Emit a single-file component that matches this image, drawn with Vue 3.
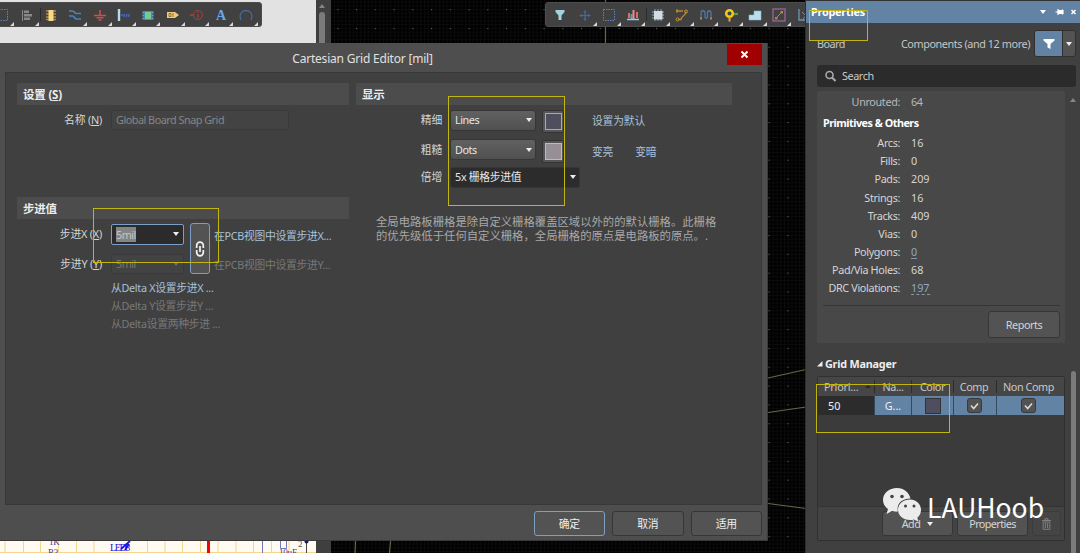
<script setup>
const primitives = [
  ['Arcs:', '16'],
  ['Fills:', '0'],
  ['Pads:', '209'],
  ['Strings:', '16'],
  ['Tracks:', '409'],
  ['Vias:', '0'],
  ['Polygons:', '0', true],
  ['Pad/Via Holes:', '68'],
  ['DRC Violations:', '197', true],
]
const leftTools = ['select', 'align', 'chip', 'wire', 'gnd', 'bus', 'sheet', 'port', 'info', 'text', 'arc']
const rightTools = ['filter', 'plus', 'select', 'chart', 'component', 'route', 'tune', 'via', 'poly', 'keepout', 'dim']
const noMenu = ['chip', 'filter']
const toolbars = [
  { name: 'tools-left', items: leftTools, sep: 'chip' },
  { name: 'tools-right', items: rightTools, sep: 'component' },
]
</script>

<template>
  <div class="screen">
    <div class="workspace">
      <div class="schematic">
        <svg class="sheet-strip" width="316" height="12" viewBox="0 0 316 12">
          <rect width="316" height="12" fill="#fffaf2" />
          <path d="M5 0V12M23.500 0V12M40.500 0V12M58.500 0V12M76.500 0V12M94 0V12M147.500 0V12M165 0V12M182.500 0V12M200.500 0V12M218 0V12M236 0V12M253.500 0V12M271.500 0V12M289 0V12M0 11.500H316" stroke="#f6d58c" stroke-width="1" fill="none" />
          <rect x="207" width="3" height="12" fill="#f00" />
          <path d="M262.500 0V12M280.500 0V7.500H286.500V0" stroke="#7474bd" fill="none" />
          <path d="M306.500 0V12" stroke="#444" />
          <circle cx="306.500" cy="0.500" r="2" fill="#118" />
          <path d="M121 8L130 0M125 9L129 3" stroke="#1515ee" stroke-width="1.800" />
          <g font-family="Liberation Serif, serif" font-size="9" fill="#3838a8">
            <text x="49" y="4">1K</text>
            <text x="48" y="14">R3</text>
            <text x="110" y="9.500" fill="#1515dd" font-size="10" textLength="20">LED8</text>
            <text x="279" y="14">10uF</text>
            <text x="298" y="6" fill="#555">2</text>
          </g>
        </svg>
      </div>
      <div class="divider"><i class="up-arrow"></i><span></span></div>
      <svg class="pcb" width="475" height="553" viewBox="331 0 475 553">
        <defs>
          <pattern id="fine" x="769" y="347.800" width="3.750" height="3.764" patternUnits="userSpaceOnUse">
            <path d="M0 .5H3.750M.5 0V3.764" stroke="#0c0c0c" stroke-width=".8" />
          </pattern>
          <pattern id="dots" x="768.500" y="347.900" width="18.750" height="18.820" patternUnits="userSpaceOnUse">
            <rect width="1.100" height="1.100" fill="#606060" />
          </pattern>
        </defs>
        <rect x="331" width="475" height="553" fill="#000" />
        <rect x="331" width="475" height="553" fill="url(#fine)" />
        <rect x="331" width="475" height="553" fill="url(#dots)" />
        <g stroke="#68684a" stroke-width="1.200" fill="none">
          <path d="M605.500 0V43M768 378L806 369.500M768 412.500L806 407M768 503.500L806 508.500M355.500 541L355 553M390.500 541L389.500 553" />
        </g>
      </svg>
    </div>

    <div v-for="bar in toolbars" :key="bar.name" class="tools" :class="bar.name">
      <div v-for="t in bar.items" :key="t" class="tool" :class="{ sep: t === bar.sep, plain: noMenu.includes(t) }">
        <svg width="14" height="14" viewBox="0 0 14 14" fill="none">
          <rect v-if="t === 'select'" x="1.500" y="1.500" width="11" height="11" stroke="#5c83bd" stroke-dasharray="1.500 1" />
          <g v-else-if="t === 'align'" fill="#888"><path d="M2 2h1v11H2zM4 2.500h5v2.500H4zM4 6h8v2.500H4zM4 9.500h6V12H4z" /></g>
          <g v-else-if="t === 'chip'"><path d="M2 3h10M2 6h10M2 9h10M2 11.500h10" stroke="#ad8a3b" stroke-width="1.300" /><rect x="4.500" y="2" width="5" height="11" fill="#fbd883" /></g>
          <path v-else-if="t === 'wire'" d="M1 3h3.500c2 0 2 2.500 4 2.500H13M1 8h3.500c2 0 2 3 4 3H13" stroke="#4d83bd" stroke-width="1.700" />
          <path v-else-if="t === 'gnd'" d="M7 2v5M1 7.500h12M3.500 9.800h7M5.500 12h3" stroke="#ce5148" stroke-width="1.500" />
          <g v-else-if="t === 'bus'"><path d="M2 1v12" stroke="#b8d9f5" stroke-width="2.400" /><path d="M4 7h2" stroke="#4e7fd2" /><path d="M6.500 9l1-3M9 9l1-3M11.500 9l1-3" stroke="#4169c5" stroke-width="1.500" /></g>
          <g v-else-if="t === 'sheet'"><path d="M1.500 4.500h11M1.500 7.500h11M1.500 10.500h11" stroke="#5fa4df" stroke-width="2" /><rect x="3.500" y="3.500" width="7" height="8" fill="#78c990" stroke="#3e91ae" /></g>
          <g v-else-if="t === 'port'"><path d="M1 4h8l4 3-4 3H1z" fill="#f0ca75" /><path d="M3 5.500h2v3H3zM7 5v4" stroke="#65522d" stroke-width=".7" /></g>
          <g v-else-if="t === 'info'" stroke="#a14340"><circle cx="8" cy="7" r="4.500" /><path d="M0 7h3.500M8 6v4M8 3.500v1.300" stroke-width="1.300" /></g>
          <text v-else-if="t === 'text'" x="7" y="12" text-anchor="middle" font-family="Liberation Serif, serif" font-weight="700" font-size="14" fill="#66a9ea">A</text>
          <path v-else-if="t === 'arc'" d="M2 12C-.5 6 3 2.500 7 2.500S14.500 6 12 12" stroke="#466b9c" stroke-width="1.300" />
          <path v-else-if="t === 'filter'" d="M2.500 2h9v2L8.500 7.500V12h-3V7.500L2.500 4z" fill="#a3d2df" />
          <path v-else-if="t === 'plus'" d="M7 2v11M1.500 7.500h11M5.500 4h3M5.500 11h3M3.500 6v3M10.500 6v3" stroke="#4668a6" stroke-width="1.200" />
          <g v-else-if="t === 'chart'"><path d="M2 5h2v5H2zM10 4h2v6h-2z" fill="#dc6d66" /><path d="M4.500 6h2v5h-2z" fill="#589ac9" /><path d="M6.500 2h2v9h-2z" fill="#ef8b82" /><path d="M1 11.500h12" stroke="#8fcde9" stroke-width="1.500" /></g>
          <g v-else-if="t === 'component'"><path d="M4 1v12M7 1v12M10 1v12M1 4h12M1 7h12M1 10h12" stroke="#748b97" stroke-width="1.400" /><rect x="3" y="3" width="8.500" height="8.500" fill="#d2dee4" /></g>
          <g v-else-if="t === 'route'"><path d="M3 11.500h3c0-4 5-3 5-8M3 3h5" stroke="#b48838" stroke-width="1.400" /><circle cx="2.500" cy="11.500" r="1.500" stroke="#c99330" /><circle cx="11" cy="3.500" r="1.500" stroke="#c99330" /><path d="M2 1.500v3" stroke="#b48838" stroke-width="2" /></g>
          <g v-else-if="t === 'tune'"><path d="M2 10.500V5c0-3 4-3 4 0v3c0 3 2.500 3 2.500 0V5c0-3 3.500-3 3.500 0v5" stroke="#5275a7" stroke-width="1.300" /><path d="M1 9.500h2v2H1zM11 9.500h2v2h-2z" fill="#b48838" /></g>
          <g v-else-if="t === 'via'"><path d="M8 6h6" stroke="#5d9d39" stroke-width="2.200" /><circle cx="5.500" cy="5.500" r="3.300" stroke="#f2c819" stroke-width="2.500" /><path d="M5.500 9v4.500" stroke="#e5a735" stroke-width="2" /></g>
          <path v-else-if="t === 'poly'" d="M1 7h5V3h7v9H1z" fill="#b9dfec" stroke="#8ab9cb" stroke-width=".6" />
          <g v-else-if="t === 'keepout'"><rect x="1" y="1" width="12" height="12" stroke="#a467a1" stroke-width="1.200" /><path d="M4 10l6-6" stroke="#b48838" /><path d="M3 9h2.500v2.500H3zM8.500 3H11v2.500H8.500z" fill="#b48838" /></g>
          <g v-else><path d="M2 1v11h12" stroke="#6b95bb" stroke-width="1.300" /><path d="M5 4l7 7M12 4l-6 7" stroke="#888" /></g>
        </svg>
      </div>
    </div>

    <section class="dialog">
      <header class="dlg-title"><span>Cartesian Grid Editor [mil]</span>
        <button class="close"><svg width="9" height="9" viewBox="0 0 9 9"><path d="M1.500 1.500l6 6M7.500 1.500l-6 6" stroke="#fff" stroke-width="1.900" /></svg></button>
      </header>
      <div class="dlg-body">
        <div class="col-left">
          <h3>设置 (<u>S</u>)</h3>
          <div class="row name-row"><label>名称 (<u>N</u>)</label><div class="field name-field">Global Board Snap Grid</div></div>
          <h3 class="step-head">步进值</h3>
          <div class="steps">
            <div class="step-fields">
              <div class="row"><label>步进X (<u>X</u>)</label><div class="field combo active"><mark>5mil</mark><i class="caret"></i></div></div>
              <div class="row"><label>步进Y (<u>Y</u>)</label><div class="field combo"><span>5mil</span><i class="caret dim"></i></div></div>
            </div>
            <button class="link-btn"><svg width="10" height="16" viewBox="0 0 10 16" fill="none" stroke="#f2f2f2" stroke-width="1.700"><path d="M1.700 7V4.500a3.300 3.300 0 0 1 6.600 0V7M8.300 9v2.500a3.300 3.300 0 0 1-6.600 0V9M5 5v6" /></svg></button>
            <div class="step-links"><a>在PCB视图中设置步进X...</a><a class="off">在PCB视图中设置步进Y...</a></div>
          </div>
          <div class="delta"><a>从Delta X设置步进X ...</a><a class="off">从Delta Y设置步进Y ...</a><a class="off">从Delta设置两种步进 ...</a></div>
        </div>
        <div class="col-right">
          <h3>显示</h3>
          <div class="display">
            <label>精细</label><div class="drop">Lines<i class="caret"></i></div><div class="swatch"><b class="fine"></b></div><div class="links"><a>设置为默认</a></div>
            <label>粗糙</label><div class="drop">Dots<i class="caret"></i></div><div class="swatch"><b class="coarse"></b></div><div class="links low"><a>变亮</a><a>变暗</a></div>
            <label>倍增</label><div class="drop wide">5x 栅格步进值<i class="caret"></i></div>
          </div>
          <p>全局电路板栅格是除自定义栅格覆盖区域以外的的默认栅格。此栅格<br />的优先级低于任何自定义栅格，全局栅格的原点是电路板的原点。.</p>
        </div>
      </div>
      <footer><button class="primary">确定</button><button>取消</button><button>适用</button></footer>
    </section>

    <aside class="props">
      <header class="p-title"><b>Properties</b>
        <svg width="44" height="10" viewBox="0 0 44 10" fill="#fff"><path d="M4 3h6L7 7z" /><path d="M19.500 5H22M22 2v6M22 3.500h5v3h-5M26.500 2.500v5" stroke="#fff" stroke-width="1.200" /><path d="M35.500 3l4 4M39.500 3l-4 4" stroke="#fff" stroke-width="1.500" /></svg>
      </header>
      <div class="p-scope"><span class="board">Board</span><span class="scope">Components (and 12 more)</span>
        <div class="filter"><span><svg width="12" height="12" viewBox="0 0 12 12" fill="#fff"><path d="M.5 1h11v1.500L7.500 6v5L4.500 9.500V6L.5 2.500z" /></svg></span><span class="fdrop"><i class="caret"></i></span></div>
      </div>
      <div class="search"><svg width="11" height="12" viewBox="0 0 11 12" fill="none" stroke="#a8a8a8"><circle cx="4.500" cy="5" r="3.500" stroke-width="1.600" /><path d="M7 7.500l3.500 3.500" stroke-width="2" /></svg>Search</div>
      <div class="p-main">
        <div class="info">
          <div class="kv first"><span>Unrouted:</span><span>64</span></div>
          <h4>Primitives &amp; Others</h4>
          <div v-for="p in primitives" :key="p[0]" class="kv"><span>{{ p[0] }}</span><span class="num"><em :class="{ lnk: p[2] }">{{ p[1] }}</em></span></div>
          <hr />
          <button class="reports">Reports</button>
        </div>
        <i class="up-arrow"></i>
      </div>
      <div class="gm-title"><svg width="6" height="6" viewBox="0 0 6 6"><path d="M5.500 0v5.500H0z" fill="#eee" /></svg>Grid Manager</div>
      <div class="p-grid">
        <div class="table">
          <div class="tr th"><span>Priori...<i class="sort"></i></span><span>Na...</span><span>Color</span><span>Comp</span><span>Non Comp</span></div>
          <div class="tr td"><span class="prio">50</span><span>G...</span><span><b></b></span>
            <span v-for="n in 2" :key="n"><i class="check"><svg width="9" height="8" viewBox="0 0 9 8"><path d="M1 3.500l2.700 3L8 1.500" fill="none" stroke="#ddd" stroke-width="1.500" /></svg></i></span></div>
          <div class="blank"></div>
          <div class="actions"><button>Add<i class="caret"></i></button><button>Properties</button>
            <button class="trash"><svg width="9" height="12" viewBox="0 0 9 12" fill="none" stroke="#808080"><path d="M0 2.500h9M3 2V.8h3V2M1.200 4h6.600v7.300H1.200zM3.400 5v5M5.600 5v5" /></svg></button></div>
        </div>
        <div class="thumb"></div>
      </div>
    </aside>

    <div class="mark m1"></div><div class="mark m2"></div><div class="mark m3"></div><div class="mark m4"></div>
    <div class="watermark">
      <svg width="39" height="34" viewBox="0 0 39 34"><path d="M14 0C6 0 0 5 0 12c0 4 2 7 5 9l-1.500 5L9 23c2 .6 4 .8 6 .6C13 16 19 10.500 27.500 10.500 26 4.500 21 0 14 0z" fill="#ececec" /><path d="M27 11.500c-7 0-12 4.500-12 10.300S20 32 27 32c1.500 0 3-.2 4-.6l4.500 2.400-1.200-4c2.500-2 3.700-4.800 3.700-8 0-5.800-5-10.300-11-10.300z" fill="#ececec" /><g fill="#444"><circle cx="9" cy="8.500" r="1.800" /><circle cx="19" cy="8.500" r="1.800" /><circle cx="22.500" cy="18" r="1.500" /><circle cx="31" cy="18" r="1.500" /></g></svg>
      <span>LAUHoob</span>
    </div>
  </div>
</template>

<style>
body { margin: 0; overflow: hidden; background: #000; }
</style>

<style scoped>
* { box-sizing: border-box; }
.screen { position: relative; width: 1080px; height: 553px; overflow: hidden; font: 10.800px/14px "Noto Sans", "Noto Sans CJK SC", sans-serif; letter-spacing: -.2px; color: #d5d5d5; white-space: nowrap; }
button { font: inherit; letter-spacing: inherit; color: inherit; padding: 0; border: 1px solid #363636; border-radius: 3px; background: #535353; display: flex; align-items: center; justify-content: center; }
i, em { font-style: normal; }
h3, h4, p { margin: 0; }
svg { display: block; flex: none; }
.caret { border: 3.500px solid transparent; border-top: 4px solid #eee; border-bottom: 0; }
.caret.dim { border-top-color: #707070; }
.up-arrow { border: 3px solid transparent; border-bottom: 4px solid #858585; border-top: 0; }

.workspace { display: flex; height: 553px; }
.schematic { width: 316px; background: #e2e2e2; display: flex; align-items: flex-end; }
.divider { width: 15px; background: #3f3f3f; display: flex; flex-direction: column; align-items: center; padding: 4px 3px 0 0; gap: 4px; }
.divider span { width: 6px; height: 40px; border-radius: 3px; background: #7b7b7b; }

.tools { position: absolute; top: 2px; height: 25px; display: flex; background: #414141; border: 1px solid #4c4c4c; border-radius: 3px; }
.tools-left { left: -11px; width: 273px; }
.tools-right { left: 545px; width: 280px; padding-left: 2px; }
.tool { position: relative; width: 24.350px; flex: none; display: flex; align-items: center; justify-content: center; }
.tool::after { content: ""; position: absolute; right: 0; bottom: 0; border: solid transparent; border-width: 4px 0 0 4px; border-right: 0; border-bottom: 4px solid #d8d8d8; border-top: 0; }
.tool.plain::after { display: none; }
.tool.sep::before { content: ""; position: absolute; left: 1px; top: 5px; height: 13px; width: 1px; background: #2a2a2a; }

.dialog { position: absolute; left: 0; top: 43px; width: 768px; height: 498px; background: #4e4e4e; border-right: 1px solid #3a3a3a; border-bottom: 1px solid #3a3a3a; display: flex; flex-direction: column; }
.dlg-title { height: 29px; flex: none; display: flex; justify-content: center; align-items: center; padding: 2px 42px 0 0; position: relative; font-size: 12px; color: #e0e0e0; }
.close { position: absolute; right: 5px; top: 1px; width: 35px; height: 21px; background: #a00000; border: 0; border-radius: 0; }
.dlg-body { height: 433px; margin: 0 5px; padding: 10px 29px 0 11px; flex: none; background: #404040; border: 1px solid #383838; display: flex; gap: 7px; }
.col-left { width: 332px; }
.col-right { width: 376px; }
h3 { height: 22px; background: #4c4c4c; padding: 1px 6px 0; font-size: 11.500px; line-height: 21px; font-weight: 700; color: #ececec; }
.row { display: flex; align-items: center; height: 30px; }
label { width: 85px; text-align: right; flex: none; }
.field { border: 1px solid #3a3a3a; background: #434343; color: #868686; display: flex; align-items: center; border-radius: 2px; margin-left: 9px; padding: 0 4px; letter-spacing: -.48px; }
.name-field { width: 178px; height: 20px; }
.step-head { margin-top: 62px; }
.steps { display: flex; }
.step-fields { width: 167px; }
.combo { width: 73px; height: 20px; justify-content: space-between; color: #777; }
.combo.active { border-color: #7c9fc5; background: #2b2b2b; height: 21px; }
.active mark { background: #858585; color: #c4c4c4; line-height: 15px; }
.link-btn { width: 20px; height: 51px; margin: 4px 0 0 6px; border-color: #7c9fc5; background: #535353; }
.step-links { display: flex; flex-direction: column; margin: 9px 0 0 4px; gap: 14px; letter-spacing: -.3px; }
a { color: #a9c1da; line-height: 15px; }
a.off { color: #787878; }
.delta { display: flex; flex-direction: column; padding: 1px 0 0 94px; gap: 3px; letter-spacing: -.3px; }
.display { display: grid; grid-template-columns: 86px 86px 22px auto; column-gap: 8px; grid-template-rows: 30px 29px 26px; align-items: center; }
.display label { width: auto; }
.drop { height: 21px; border: 1px solid #363636; border-radius: 3px; background: linear-gradient(#616161, #505050); display: flex; align-items: center; justify-content: space-between; padding: 0 3px 0 4px; color: #e6e6e6; letter-spacing: -.45px; }
.drop.wide { grid-column: span 3; width: 130px; background: #2c2c2c; letter-spacing: -.3px; }
.swatch { width: 22px; height: 23px; border: 1px solid #333; border-radius: 2px; background: #555; display: flex; align-items: center; justify-content: center; margin: 3px 0 0 -2px; }
.swatch b { width: 17px; height: 17px; border: 1px solid #a9a9b5; }
.fine { background: #4e4e5e; }
.swatch b.coarse { background: #969096; border-color: #c0b8c0; }
.links { display: flex; gap: 22px; padding-left: 18px; }
.low { padding-top: 3px; }
p { margin: 25px 0 0 20px; line-height: 13.500px; color: #a8a8a8; font-size: 11.350px; letter-spacing: 0; }
footer { display: flex; justify-content: flex-end; gap: 7px; padding: 6px 5px 0 0; }
footer button { width: 71.500px; height: 25px; color: #eee; }
footer .primary { border-color: #7c9fc5; }

.props { position: absolute; left: 805px; top: 0; width: 275px; height: 553px; background: #404040; border-left: 1px solid #2e2e2e; border-top: 1px solid #333; display: flex; flex-direction: column; letter-spacing: -.4px; }
.p-title { height: 22px; flex: none; background: #6283a3; color: #fff; display: flex; justify-content: space-between; align-items: center; padding-left: 5px; letter-spacing: -.2px; }
.p-scope { height: 25px; margin-top: 8px; display: flex; align-items: center; flex: none; padding: 0 4px 0 11px; color: #c5c5c5; }
.board { letter-spacing: -.5px; }
.scope { margin-left: auto; }
.filter { display: flex; width: 42px; height: 27px; border: 1px solid #303030; border-radius: 3px; margin-left: 4px; overflow: hidden; }
.filter span { flex: 1; background: #6283a3; display: flex; align-items: center; justify-content: center; }
.filter .fdrop { flex: none; width: 13px; background: #535353; border-left: 1px solid #303030; }
.search { height: 22px; margin: 9px 4px 0 11px; border-radius: 3px; background: #2b2b2b; display: flex; align-items: center; gap: 6px; padding-left: 8px; flex: none; color: #cacaca; }
.p-main { display: flex; margin: 4px 4px 0 11px; gap: 5px; flex: none; }
.p-main .up-arrow { margin-top: 7px; height: 4px; }
.info { width: 248px; height: 252px; background: #484848; border-radius: 2px; padding: 2px 5px 0 6px; }
.kv { display: grid; grid-template-columns: 77px 1fr; column-gap: 11px; height: 18.150px; line-height: 18px; }
.kv span:first-child { text-align: right; letter-spacing: -.35px; }
.kv .num { letter-spacing: 0; }
.kv.first { color: #b8b8b8; }
h4 { height: 22px; font-size: 10.800px; line-height: 24px; color: #fff; margin-bottom: 1px; letter-spacing: -.5px; }
.lnk { color: #90a9c4; border-bottom: 1px dashed #8798ab; display: inline-block; line-height: 13px; }
hr { border: 0; height: 1px; background: #353535; margin: 8px 0 5px; }
.reports { width: 72px; height: 27px; margin-left: auto; }
.gm-title { margin: 14px 0 0 11px; font-weight: 700; color: #eee; display: flex; align-items: center; gap: 2px; flex: none; letter-spacing: -.2px; }
.p-grid { display: flex; margin: 5px 0 0 11px; gap: 6px; }
.table { width: 248px; height: 165px; border: 1px solid #303030; display: flex; flex-direction: column; border-radius: 2px; }
.tr { display: grid; grid-template-columns: 57px 37px 42px 43px 67px; height: 19px; flex: none; }
.tr > span { display: flex; align-items: center; justify-content: center; border-right: 1px solid #34495c; }
.th { background: #464646; color: #c6c6c6; }
.th > span { border-image: linear-gradient(transparent 20%, #2c2c2c 20% 80%, transparent 80%) 1; }
.tr > span:last-child { border: 0; padding-right: 4px; }
.tr > span:nth-child(4) { padding-right: 2px; }
.th > span:first-child { justify-content: flex-start; padding-left: 6px; gap: 7px; letter-spacing: -.2px; }
.sort { border: 3px solid transparent; border-bottom: 3px solid #292929; border-top: 0; }
.td { background: #6283a3; color: #f2f2f2; letter-spacing: 0; }
.td .prio { background: #2c2c2c; justify-content: flex-start; padding-left: 10px; }
.td b { width: 16px; height: 16px; background: #4e4e5e; border: 1px solid #333; }
.check { width: 15px; height: 15px; border-radius: 3px; background: #535353; border: 1px solid #3a3a3a; display: flex; align-items: center; justify-content: center; }
.blank { flex: 1; background: #3b3b3b; }
.actions { height: 34px; background: #434343; border-top: 1px solid #343434; display: flex; justify-content: flex-end; gap: 4px; padding: 4px 3px 0 0; flex: none; }
.actions button { width: 71px; height: 25px; gap: 7px; letter-spacing: -.6px; }
.actions .trash { width: 29px; background: #454545; border-color: #3c3c3c; }
.thumb { width: 5px; height: 190px; margin-top: -5px; border-radius: 3px; background: #7b7b7b; }

.mark { position: absolute; border: 1px solid #c2b60d; }
.m1 { left: 809px; top: 10px; width: 59px; height: 31px; }
.m2 { left: 448px; top: 96px; width: 117px; height: 110px; }
.m3 { left: 93px; top: 208px; width: 126px; height: 55px; }
.m4 { left: 816px; top: 384px; width: 134px; height: 49px; }
.watermark { position: absolute; left: 883px; top: 488px; display: flex; gap: 5px; letter-spacing: 0; }
.watermark span { font: 26.500px/39px "Noto Sans CJK SC", sans-serif; color: #fff; margin-top: -1px; }
</style>
